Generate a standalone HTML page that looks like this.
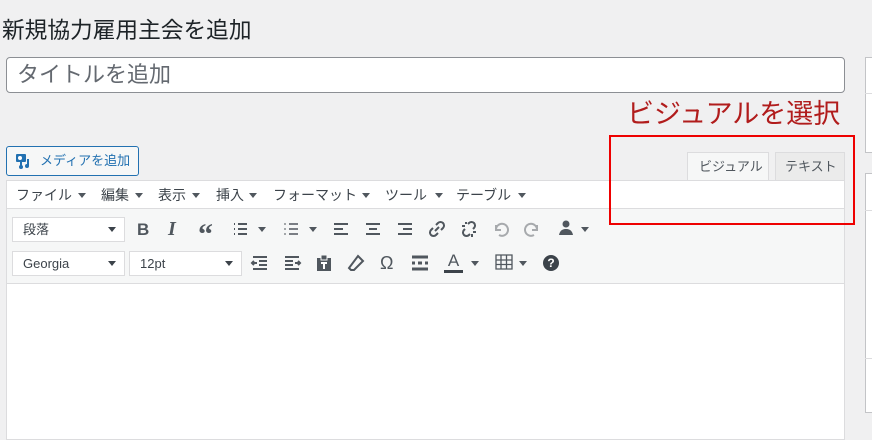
<!DOCTYPE html>
<html><head><meta charset="utf-8"><style>
*{box-sizing:border-box;margin:0;padding:0}
body{width:872px;height:431px;overflow:hidden;background:#f0f0f1;font-family:"Liberation Sans","Noto Sans CJK JP",sans-serif;color:#1d2327;position:relative}
.a{position:absolute}
svg.i{position:absolute;width:20px;height:20px}
svg.i *{stroke:#50575e;fill:none;stroke-width:2}
.sel{position:absolute;background:#fff;border:1px solid #dcdcde;height:25px;font-size:13px;line-height:23px;color:#3c434a;padding:0 10px}
.sel:after{content:"";position:absolute;right:8px;top:9px;border:4px solid transparent;border-top:5px solid #3c434a;border-bottom:0}
.tri{position:absolute;border:4px solid transparent;border-top:5px solid #50575e;border-bottom:0;width:0;height:0}
.m{position:absolute;top:185px;font-size:14px;color:#3c434a}
</style></head><body>
<div class="a" style="left:2px;top:12px;font-size:22.7px;color:#1d2327;white-space:nowrap">新規協力雇用主会を追加</div>
<div class="a" style="left:6px;top:57px;width:839px;height:36px;background:#fff;border:1px solid #8c8f94;border-radius:4px;font-size:22px;line-height:34px;color:#646970;padding:0 10px">タイトルを追加</div>
<div class="a" style="left:865px;top:57px;width:10px;height:96px;background:#fff;border:1px solid #c3c4c7"></div>
<div class="a" style="left:865px;top:93px;width:10px;height:1px;background:#dcdcde"></div>
<div class="a" style="left:865px;top:173px;width:10px;height:240px;background:#fff;border:1px solid #c3c4c7"></div>
<div class="a" style="left:865px;top:210px;width:10px;height:1px;background:#dcdcde"></div>
<div class="a" style="left:865px;top:358px;width:10px;height:1px;background:#dcdcde"></div>
<div class="a" style="left:627px;top:97px;font-size:27px;color:#b11c1c;white-space:nowrap;line-height:34px">ビジュアルを選択</div>
<div class="a" style="left:6px;top:146px;width:133px;height:30px;border:1px solid #2271b1;border-radius:3px;background:#f6f7f7;color:#2271b1;font-size:13px;line-height:28px;padding-left:33px">メディアを追加</div>
<svg class="a" style="left:15px;top:153px" width="18" height="16" viewBox="0 0 18 16"><rect x="1" y="1" width="10" height="8" rx="1" fill="#2271b1"/><circle cx="5" cy="5" r="2" fill="#fff"/><path d="M6 9v5M13 6v7" stroke="#2271b1" stroke-width="2"/><circle cx="6" cy="14" r="2" fill="#2271b1"/><circle cx="12" cy="13" r="2" fill="#2271b1"/></svg>
<div class="a" style="left:687px;top:152px;width:82px;height:30px;background:#f6f7f7;border:1px solid #dcdcde;border-bottom:0;font-size:13px;line-height:28px;color:#50575e;padding-left:11px">ビジュアル</div>
<div class="a" style="left:775px;top:152px;width:70px;height:29px;background:#ebebeb;border:1px solid #dcdcde;font-size:13px;line-height:27px;color:#50575e;padding-left:9px">テキスト</div>
<div class="a" style="left:6px;top:180px;width:839px;height:260px;background:#fff;border:1px solid #dcdcde"></div>
<div class="a" style="left:7px;top:208px;width:837px;height:76px;background:#f6f7f7;border-top:1px solid #dcdcde;border-bottom:1px solid #dcdcde"></div>
<div class="m" style="left:16px">ファイル</div><div class="tri" style="left:78px;top:193px"></div>
<div class="m" style="left:101px">編集</div><div class="tri" style="left:135px;top:193px"></div>
<div class="m" style="left:158px">表示</div><div class="tri" style="left:192px;top:193px"></div>
<div class="m" style="left:216px">挿入</div><div class="tri" style="left:249px;top:193px"></div>
<div class="m" style="left:273px">フォーマット</div><div class="tri" style="left:362px;top:193px"></div>
<div class="m" style="left:385px">ツール</div><div class="tri" style="left:435px;top:193px"></div>
<div class="m" style="left:456px">テーブル</div><div class="tri" style="left:518px;top:193px"></div>
<div class="sel" style="left:12px;top:217px;width:113px">段落</div>
<div class="sel" style="left:12px;top:251px;width:113px">Georgia</div>
<div class="sel" style="left:129px;top:251px;width:113px">12pt</div>
<div class="a" style="left:137px;top:220px;font-weight:bold;font-size:17px;color:#50575e">B</div>
<div class="a" style="left:168px;top:218px;font-style:italic;font-family:'Liberation Serif',serif;font-size:20px;color:#50575e;font-weight:bold">I</div>
<div class="a" style="left:198px;top:218px;font-weight:bold;font-size:30px;font-family:'Liberation Serif',serif;color:#50575e">“</div>
<svg class="i" style="left:231px;top:219px" viewBox="0 0 20 20"><path d="M3 5h1M3 10h1M3 15h1M7 5h9M7 10h9M7 15h9"/></svg><div class="tri" style="left:258px;top:227px"></div>
<svg class="i" style="left:282px;top:219px" viewBox="0 0 20 20"><path d="M7 5h9M7 10h9M7 15h9" style="stroke-width:1.5"/><path d="M3 4v2M3 9v2M3 14v2" style="stroke-width:1"/></svg><div class="tri" style="left:309px;top:227px"></div>
<svg class="i" style="left:331px;top:219px" viewBox="0 0 20 20"><path d="M3 5h14M3 10h9M3 15h14"/></svg>
<svg class="i" style="left:363px;top:219px" viewBox="0 0 20 20"><path d="M3 5h14M6 10h8M3 15h14"/></svg>
<svg class="i" style="left:395px;top:219px" viewBox="0 0 20 20"><path d="M3 5h14M8 10h9M3 15h14"/></svg>
<svg class="i" style="left:427px;top:219px" viewBox="0 0 20 20"><path d="M8 12l4-4M9 6l2-2a3 3 0 0 1 5 5l-2 2M11 14l-2 2a3 3 0 0 1-5-5l2-2"/></svg>
<svg class="i" style="left:459px;top:219px" viewBox="0 0 20 20"><path d="M9 5l1-1a3 3 0 0 1 5 5l-1 1M11 15l-1 1a3 3 0 0 1-5-5l1-1M3 7h3M14 13h3M7 3v2M13 15v3"/></svg>
<svg class="i" style="left:491px;top:219px" viewBox="0 0 20 20"><path d="M5 6v5h5M5 11a6 6 0 1 1 3 5" style="stroke:#a7aaad"/></svg>
<svg class="i" style="left:522px;top:219px" viewBox="0 0 20 20"><path d="M15 6v5h-5M15 11a6 6 0 1 0-3 5" style="stroke:#a7aaad"/></svg>
<svg class="i" style="left:556px;top:218px" viewBox="0 0 20 20"><circle cx="10" cy="6" r="3.5" style="fill:#50575e;stroke:none"/><path d="M3 17c1-5 4-6 7-6s6 1 7 6z" style="fill:#50575e;stroke:none"/></svg><div class="tri" style="left:581px;top:227px"></div>
<svg class="i" style="left:250px;top:253px" viewBox="0 0 20 20"><path d="M3 4h14M9 8h8M9 12h8M3 16h14M2 10h5M4 8l-2 2 2 2"/></svg>
<svg class="i" style="left:282px;top:253px" viewBox="0 0 20 20"><path d="M3 4h14M3 8h8M3 12h8M3 16h14M13 10h5M16 8l2 2-2 2"/></svg>
<svg class="i" style="left:314px;top:253px" viewBox="0 0 20 20"><rect x="3" y="5" width="14" height="13" style="fill:#50575e;stroke:none"/><rect x="7" y="2" width="6" height="5" style="fill:#50575e;stroke:#f6f7f7;stroke-width:1"/><path d="M7 10h6M10 10v6" style="stroke:#fff"/></svg>
<svg class="i" style="left:346px;top:253px" viewBox="0 0 20 20"><path d="M12 3l5 5-9 9H5l-2-2z"/></svg>
<div class="a" style="left:380px;top:253px;font-size:18px;color:#50575e">Ω</div>
<svg class="i" style="left:410px;top:253px" viewBox="0 0 20 20"><path d="M2 4h16M2 16h16M2 10h3M8 10h4M15 10h3" style="stroke-width:3"/></svg>
<div class="a" style="left:444px;top:251px;font-size:17px;color:#50575e;border-bottom:3px solid #3c434a;width:19px;text-align:center;line-height:19px">A</div><div class="tri" style="left:471px;top:261px"></div>
<svg class="i" style="left:494px;top:252px" viewBox="0 0 20 20"><path d="M2 3h16v14H2zM2 8h16M2 12.5h16M7 3v14M12.5 3v14" style="stroke-width:1.3"/></svg><div class="tri" style="left:519px;top:261px"></div>
<div class="a" style="left:543px;top:255px;width:16px;height:16px;border-radius:50%;background:#3c434a;color:#fff;font-size:12px;font-weight:bold;text-align:center;line-height:16px">?</div>
<div class="a" style="left:609px;top:135px;width:246px;height:90px;border:2px solid #e00"></div>
</body></html>
